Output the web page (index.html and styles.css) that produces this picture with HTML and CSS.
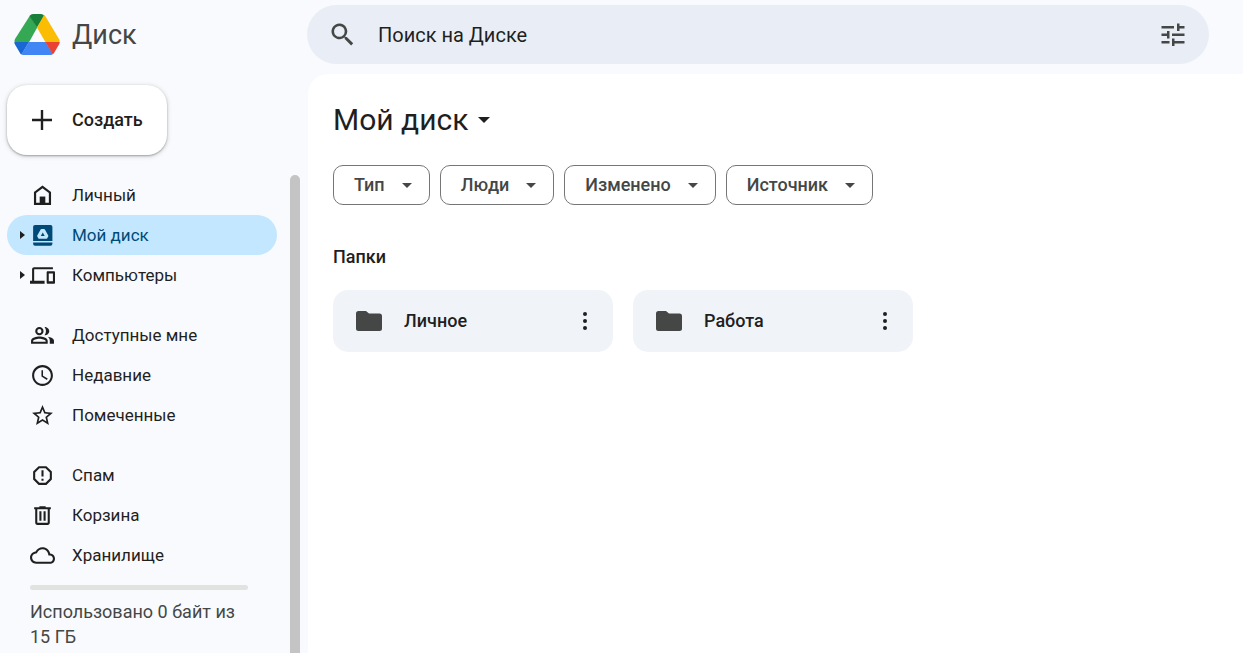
FILE: index.html
```html
<!DOCTYPE html>
<html lang="ru">
<head>
<meta charset="utf-8">
<meta name="viewport" content="width=device-width, initial-scale=1">
<title>Мой диск</title>
<link rel="stylesheet" href="styles.css">
</head>
<body>
<div class="app">
  <aside class="sidebar">
    <a class="brand" href="#">
      <svg class="brand-logo" viewBox="0 0 46 41" aria-hidden="true">
        <path fill="#34a853" d="M16 1.5 L1 25 Q0 27 .7 28.2 H15 L23.200 13.500 Z"/>
        <path fill="#188038" d="M15.500 2 Q17 0 19 0 H27 Q29 0 30.500 2 L23 13.500 Z"/>
        <path fill="#fbbc04" d="M30 1 L23 13.500 L31.500 28.200 H45.500 Q46 26.500 45 25 L31.500 2.500 Q31 1.500 30 1Z"/>
        <path fill="#1967d2" d="M.4 28 H15 L7.500 40.500 Q6.500 40 6 39 L1 30.500 Q.4 29.500 .4 28Z"/>
        <path fill="#4285f4" d="M15 28 H31.500 L39 40 Q38 41 36.500 41 H9.500 Q8 41 7.300 40.300Z"/>
        <path fill="#ea4335" d="M31.200 28 H45.700 Q45.700 29.500 45 30.500 L40 39 Q39.500 40 38.700 40.300Z"/>
      </svg>
      <span>Диск</span>
    </a>
    <button class="create" type="button">
      <svg class="create-icon" viewBox="0 0 20 20" aria-hidden="true"><path d="M10 0v20M0 10h20" stroke="#1f1f1f" stroke-width="2.400"/></svg>
      <span>Создать</span>
    </button>
    <div class="sidebar-body">
      <div class="sidebar-content">
        <nav class="nav">
          <ul class="nav-group">
            <li><a class="nav-item" href="#">
              <span class="caret"></span>
              <svg class="icon" viewBox="0 0 24 24" aria-hidden="true"><path fill-rule="evenodd" d="M12 2.500 3.800 8.700V21h16.400V8.700zM12 5.100l6.100 4.600V18.900H5.900V9.700z"/><path d="M9.300 13h5.400v7H9.300z"/></svg>
              <span>Личный</span></a></li>
            <li><a class="nav-item active" href="#" aria-current="page">
              <svg class="caret" viewBox="0 0 5 8" aria-hidden="true"><path d="M0 0l5 4-5 4z"/></svg>
              <svg class="icon" viewBox="0 0 24 24" aria-hidden="true"><path fill-rule="evenodd" d="M3 18.800h18.500v1.200a1.800 1.800 0 0 1-1.800 1.800H4.800A1.800 1.800 0 0 1 3 20zM4.800 1.800h14.900A1.800 1.800 0 0 1 21.500 3.600V17.300H3V3.600A1.800 1.800 0 0 1 4.800 1.800zM11 5.800a1 1 0 0 0-.8.400L7 12a1 1 0 0 0 0 .9l1.100 1.900a1 1 0 0 0 .8.400h6.700a1 1 0 0 0 .8-.4l1.100-1.900a1 1 0 0 0 0-.9L14.300 6.200a1 1 0 0 0-.8-.4zM12.250 9.200l1.900 3.200h-3.800z"/></svg>
              <span>Мой диск</span></a></li>
            <li><a class="nav-item" href="#">
              <svg class="caret" viewBox="0 0 5 8" aria-hidden="true"><path d="M0 0l5 4-5 4z"/></svg>
              <svg class="icon" viewBox="0 0 24 24" aria-hidden="true"><path d="M4 6h18V4H4c-1.100 0-2 .9-2 2v11H0v3h14v-3H4V6zm19 2h-6c-.55 0-1 .45-1 1v10c0 .55.45 1 1 1h6c.55 0 1-.45 1-1V9c0-.55-.45-1-1-1zm-1 9.500h-4V10h4v7.500z"/></svg>
              <span>Компьютеры</span></a></li>
          </ul>
          <ul class="nav-group">
            <li><a class="nav-item" href="#">
              <span class="caret"></span>
              <svg class="icon" viewBox="0 0 24 24" aria-hidden="true"><path fill-rule="evenodd" d="M9 3.800a4 4 0 1 1 0 8.000 4 4 0 0 1 0-8zm0 2a2 2 0 1 0 0 4.000 2 2 0 0 0 0-4zM9 13c-2.700 0-8 1.300-8 4v3h16v-3c0-2.700-5.300-4-8-4zm6 5H3v-.99c.2-.72 3.300-2.010 6-2.010s5.800 1.290 6 2v1zM14 11.700c2.200 0 4.500-1.700 4.500-3.900S16.200 3.900 14 3.900c1.800 2.300 1.800 5.500 0 7.800zM17 13.300c1.300.95 2 2.100 2 3.700v3h4v-3c0-2.100-3.200-3.300-6-3.700z"/></svg>
              <span>Доступные мне</span></a></li>
            <li><a class="nav-item" href="#">
              <span class="caret"></span>
              <svg class="icon" viewBox="0 0 24 24" aria-hidden="true"><path d="M12 2C6.500 2 2 6.500 2 12s4.500 10 10 10 10-4.500 10-10S17.500 2 12 2zm0 18c-4.410 0-8-3.590-8-8s3.590-8 8-8 8 3.590 8 8-3.590 8-8 8zm.5-13H11v6l5.200 3.200.8-1.300-4.500-2.700V7z"/></svg>
              <span>Недавние</span></a></li>
            <li><a class="nav-item" href="#">
              <span class="caret"></span>
              <svg class="icon" viewBox="0 0 24 24" aria-hidden="true"><path d="m22 9.240-7.190-.62L12 2 9.190 8.630 2 9.240l5.460 4.730L5.820 21 12 17.270 18.180 21l-1.630-7.030L22 9.240zM12 15.400l-3.760 2.270 1-4.280-3.320-2.880 4.380-.38L12 6.100l1.710 4.040 4.380.38-3.320 2.880 1 4.280L12 15.400z"/></svg>
              <span>Помеченные</span></a></li>
          </ul>
          <ul class="nav-group">
            <li><a class="nav-item" href="#">
              <span class="caret"></span>
              <svg class="icon" viewBox="0 0 24 24" aria-hidden="true"><path d="M15.730 3H8.270L3 8.270v7.460L8.270 21h7.460L21 15.730V8.270L15.730 3zM19 14.900 14.900 19H9.100L5 14.900V9.100L9.100 5h5.800L19 9.100v5.800zM11 7h2v6h-2zM11 15h2v2h-2z"/></svg>
              <span>Спам</span></a></li>
            <li><a class="nav-item" href="#">
              <span class="caret"></span>
              <svg class="icon" viewBox="0 0 24 24" aria-hidden="true"><path d="M15 4V3H9v1H4v2h1v13c0 1.100.9 2 2 2h10c1.100 0 2-.9 2-2V6h1V4h-5zm2 15H7V6h10v13zM9 8h2v9H9zm4 0h2v9h-2z"/></svg>
              <span>Корзина</span></a></li>
            <li><a class="nav-item" href="#">
              <span class="caret"></span>
              <svg class="icon" viewBox="0 0 24 24" aria-hidden="true"><path d="M19.350 10.040C18.670 6.590 15.640 4 12 4 9.110 4 6.600 5.640 5.350 8.040 2.340 8.360 0 10.910 0 14c0 3.310 2.690 6 6 6h13c2.760 0 5-2.240 5-5 0-2.640-2.050-4.780-4.650-4.960zM19 18H6c-2.210 0-4-1.790-4-4 0-2.050 1.530-3.760 3.560-3.970l1.070-.11.5-.95C8.080 7.140 9.940 6 12 6c2.620 0 4.880 1.860 5.390 4.430l.3 1.500 1.530.11c1.560.1 2.780 1.410 2.780 2.960 0 1.650-1.350 3-3 3z"/></svg>
              <span>Хранилище</span></a></li>
          </ul>
        </nav>
        <div class="storage">
          <div class="storage-bar"></div>
          <p class="storage-text">Использовано 0 байт из 15 ГБ</p>
        </div>
      </div>
      <div class="scrollbar"></div>
    </div>
  </aside>
  <div class="content">
    <form class="search" role="search">
      <button class="icon-button" type="button" aria-label="Поиск">
        <svg class="search-icon" viewBox="0 0 24 24" aria-hidden="true"><path fill-rule="evenodd" d="M9 1.500a7.500 7.500 0 1 0 4.700 13.300l.4.400v1.200l6.200 6.100 2-2-6.200-6.100h-1.200l-.3-.4A7.500 7.500 0 0 0 9 1.500zM9 3.900a5.100 5.100 0 1 1 0 10.200 5.100 5.100 0 0 1 0-10.200z"/></svg>
      </button>
      <input class="search-input" type="text" placeholder="Поиск на Диске" aria-label="Поиск на Диске">
      <button class="icon-button" type="button" aria-label="Расширенный поиск">
        <svg class="search-icon" viewBox="0 0 25 25" aria-hidden="true"><path d="M.5 4H13v2.500H.5zM16 1.500h2.500V4H23.500v2.500h-5V9H16zM6 9h2.500v7.500H6V14H.5v-2.500H6zM11 11.500H23.500V14H11zM.5 19H8.500v2.500H.5zM11 16.500h2.500V19H23.500v2.500h-10V24H11z"/></svg>
      </button>
    </form>
    <main class="main">
      <h1 class="title"><button class="title-button" type="button">Мой диск
        <svg class="title-caret" viewBox="0 0 12 6" aria-hidden="true"><path d="M0 0h12L6 6z"/></svg></button></h1>
      <div class="filters">
        <button class="chip" type="button">Тип<svg class="chip-caret" viewBox="0 0 10 5" aria-hidden="true"><path d="M0 0h10L5 5z"/></svg></button>
        <button class="chip" type="button">Люди<svg class="chip-caret" viewBox="0 0 10 5" aria-hidden="true"><path d="M0 0h10L5 5z"/></svg></button>
        <button class="chip" type="button">Изменено<svg class="chip-caret" viewBox="0 0 10 5" aria-hidden="true"><path d="M0 0h10L5 5z"/></svg></button>
        <button class="chip" type="button">Источник<svg class="chip-caret" viewBox="0 0 10 5" aria-hidden="true"><path d="M0 0h10L5 5z"/></svg></button>
      </div>
      <h2 class="section-title">Папки</h2>
      <div class="folders">
        <article class="folder">
          <svg class="folder-icon" viewBox="0 0 26 20" aria-hidden="true"><path d="M2.500 0H10l3 2.500h10.500A2.500 2.500 0 0 1 26 5v12.500a2.500 2.500 0 0 1-2.500 2.500h-21A2.500 2.500 0 0 1 0 17.500v-15A2.500 2.500 0 0 1 2.500 0z"/></svg>
          <span class="folder-name">Личное</span>
          <button class="more" type="button" aria-label="Другие действия"><svg class="more-icon" viewBox="0 0 4 18" aria-hidden="true"><circle cx="2" cy="2" r="2"/><circle cx="2" cy="9" r="2"/><circle cx="2" cy="16" r="2"/></svg></button>
        </article>
        <article class="folder">
          <svg class="folder-icon" viewBox="0 0 26 20" aria-hidden="true"><path d="M2.500 0H10l3 2.500h10.500A2.500 2.500 0 0 1 26 5v12.500a2.500 2.500 0 0 1-2.500 2.500h-21A2.500 2.500 0 0 1 0 17.500v-15A2.500 2.500 0 0 1 2.500 0z"/></svg>
          <span class="folder-name">Работа</span>
          <button class="more" type="button" aria-label="Другие действия"><svg class="more-icon" viewBox="0 0 4 18" aria-hidden="true"><circle cx="2" cy="2" r="2"/><circle cx="2" cy="9" r="2"/><circle cx="2" cy="16" r="2"/></svg></button>
        </article>
      </div>
    </main>
  </div>
</div>
</body>
</html>
```
FILE: styles.css
```css
* { box-sizing: border-box; }
body {
  margin: 0;
  background: #f8fafd;
  color: #1f1f1f;
  font: 18px/24px Roboto, "Noto Sans", sans-serif;
}
button, input {
  font: inherit;
  color: inherit;
  border: 0;
  background: none;
  padding: 0;
  margin: 0;
}
button { cursor: pointer; }
a { color: inherit; text-decoration: none; }
svg { display: block; flex: none; fill: currentColor; }
ul { list-style: none; margin: 0; padding: 0; }

.app {
  display: grid;
  grid-template-columns: 307px 1fr;
  height: 100vh;
  overflow: hidden;
}

.sidebar {
  display: flex;
  flex-direction: column;
  align-items: flex-start;
  min-height: 0;
  padding-left: 7px;
}
.brand {
  display: flex;
  align-items: center;
  gap: 12px;
  height: 69px;
  padding-left: 7px;
  font-size: 27px;
  color: #444746;
}
.brand-logo { width: 46px; height: 41px; }
.create {
  display: flex;
  align-items: center;
  gap: 20px;
  height: 70px;
  margin: 16px 0 20px;
  padding: 0 24px 0 25px;
  border-radius: 20px;
  background: #fff;
  box-shadow: 0 1px 2px rgba(60, 64, 67, .4), 0 1px 4px 1px rgba(60, 64, 67, .15);
  font-weight: 500;
}
.create-icon { width: 20px; height: 20px; }

.sidebar-body {
  display: flex;
  flex: 1;
  width: 293px;
  min-height: 0;
  overflow: hidden;
}
.sidebar-content { flex: 1; }
.scrollbar {
  width: 10px;
  border-radius: 5px 5px 0 0;
  background: #c4c4c4;
}
.nav {
  display: flex;
  flex-direction: column;
  gap: 20px;
  width: 270px;
}
.nav-item {
  display: flex;
  align-items: center;
  height: 40px;
  padding-left: 13px;
  border-radius: 20px;
  font-size: 17px;
}
.nav-item.active { background: #c2e7ff; color: #004a77; }
.caret { width: 5px; height: 8px; margin-right: 5px; fill: #1f1f1f; }
.icon { width: 25px; height: 25px; margin-right: 17px; }
.storage {
  width: 241px;
  padding: 10px 0 0 23px;
  color: #444746;
}
.storage-bar { height: 5px; border-radius: 3px; background: #e1e3e1; }
.storage-text { margin: 9px 0 0; line-height: 25px; }

.content {
  display: flex;
  flex-direction: column;
  min-width: 0;
}
.search {
  display: flex;
  align-items: center;
  height: 59px;
  margin: 5px 34px 10px 0;
  padding: 0 23px;
  border-radius: 30px;
  background: #e9eef6;
}
.icon-button { color: #444746; }
.search-icon { width: 25px; height: 25px; }
.search-input {
  flex: 1;
  min-width: 0;
  padding: 0 23px;
  font-size: 20px;
  outline: 0;
}
.search-input::placeholder { color: #1f1f1f; opacity: 1; }

.main {
  flex: 1;
  margin-left: 1px;
  padding: 26px 25px;
  border-radius: 20px 0 0;
  background: #fff;
}
.title { margin: 0; font-size: 30px; line-height: 40px; font-weight: 400; }
.title-button { display: flex; align-items: center; gap: 10px; }
.title-caret { width: 12px; height: 6px; }
.filters { display: flex; flex-wrap: wrap; gap: 10px; margin-top: 25px; }
.chip {
  display: flex;
  align-items: center;
  gap: 17px;
  height: 40px;
  padding: 0 17px 0 20px;
  border: 1px solid #747775;
  border-radius: 10px;
  color: #444746;
  font-weight: 500;
}
.chip-caret { width: 10px; height: 5px; }
.section-title { margin: 40px 0 21px; font-size: 18px; line-height: 24px; font-weight: 500; }
.folders {
  display: grid;
  grid-template-columns: repeat(auto-fill, 280px);
  gap: 20px;
}
.folder {
  display: flex;
  align-items: center;
  height: 62px;
  padding: 0 16px 0 23px;
  border-radius: 15px;
  background: #f0f4f9;
  font-weight: 500;
}
.folder-icon { width: 26px; height: 20px; color: #444746; }
.folder-name { flex: 1; margin-left: 22px; }
.more { padding: 10px; }
.more-icon { width: 4px; height: 18px; }
```
